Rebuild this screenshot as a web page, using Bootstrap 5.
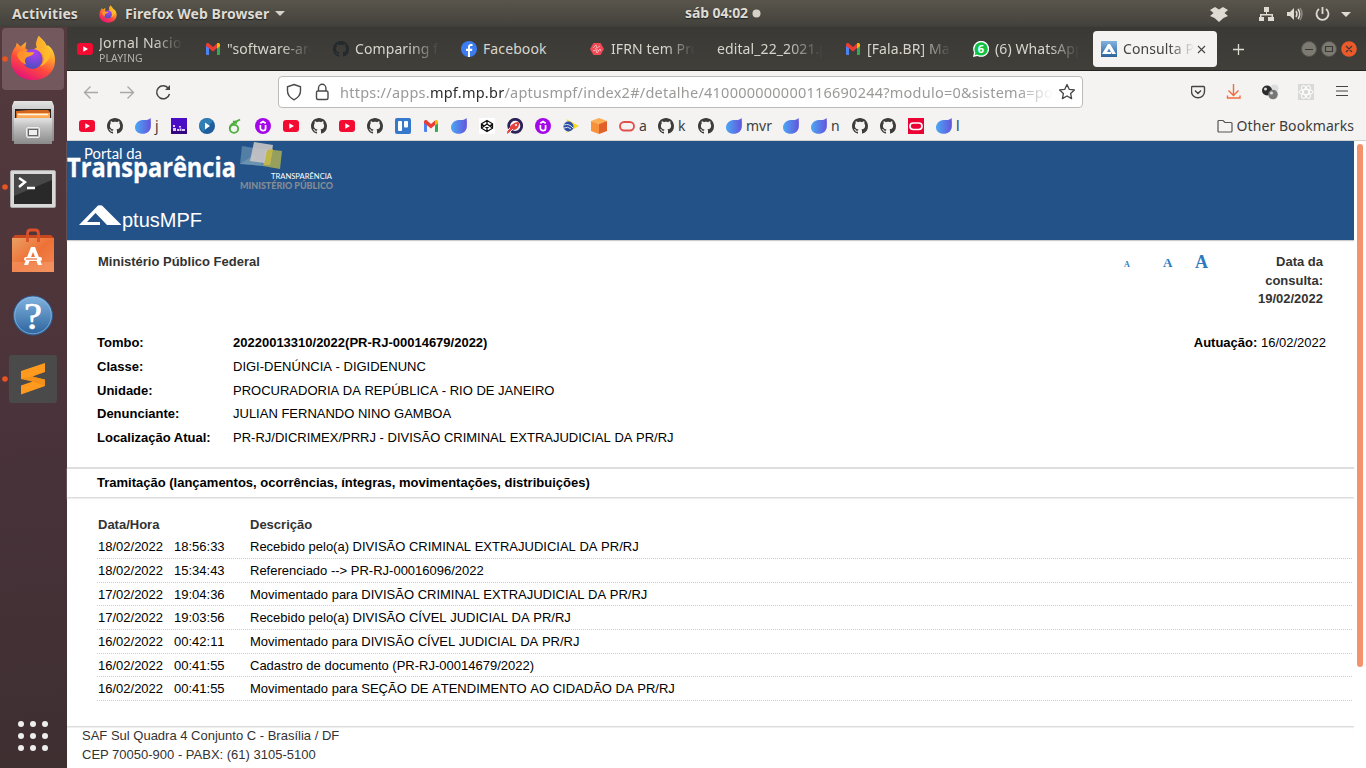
<!DOCTYPE html>
<html lang="pt-BR">
<head>
<meta charset="utf-8">
<title>Consulta Processual - AptusMPF</title>
<meta name="viewport" content="width=device-width, initial-scale=1">
<link href="https://cdn.jsdelivr.net/npm/bootstrap@5.3.0/dist/css/bootstrap.min.css" rel="stylesheet">
<style>
body{width:1366px;height:768px;overflow:hidden;font-family:"Noto Sans","Open Sans",sans-serif;font-size:14px;line-height:20px;color:#3c3c3c;background:#fff}
svg{display:block;flex:none}
.topbar{height:27px;background:linear-gradient(#59554c,#45433d 90%,#3f3e39);color:#dfdbd2;font-weight:700;font-size:14px;text-shadow:0 1px 1px #222}
.topbar .clock{left:685px;top:3px;letter-spacing:-.1px}
.topbar .act{width:68px;margin-left:12px;margin-right:19px;letter-spacing:.1px}
.topbar .app{width:150px;letter-spacing:.05px}
.launcher{width:67px;background:linear-gradient(175deg,#523a3e,#4e353a 35%,#48323a 60%,#3e2f31)}
.stripbar{height:44px;background:linear-gradient(#3a3935,#403f3a);border-bottom:1px solid #24231f;color:#d9d5cc}
.tabitem{width:128px;padding:4px 2px}
.tabitem>div{padding-left:8px;height:36px;border-radius:4px;gap:6px}
.lbl{width:84px;overflow:hidden;white-space:nowrap;letter-spacing:.1px;-webkit-mask-image:linear-gradient(90deg,#000 65%,transparent);mask-image:linear-gradient(90deg,#000 65%,transparent)}
.noicon .lbl{width:106px}
.tabitem.on>div{background:#f5f3f2;color:#45433f}
.tabitem.on .lbl{width:71px}
.tabitem.full .lbl{-webkit-mask-image:none;mask-image:none}
.tabtitle{line-height:17px;letter-spacing:.3px}
.playing{font-size:10.5px;line-height:14px;color:#b5b2ab}
.navrow{height:41px;background:#f4f3f2}
.urlbox{width:805px;height:32px;background:#fff;border:1px solid #bdbbb9;border-radius:4px;color:#9b9a99;margin-left:107px}
.urltext{width:713px;overflow:hidden;white-space:nowrap;letter-spacing:.24px;font-size:14.5px;-webkit-mask-image:linear-gradient(90deg,#000 95%,transparent);mask-image:linear-gradient(90deg,#000 95%,transparent)}
.urltext b{font-weight:400;color:#2c2c2c}
.bmrow{height:29px;background:#f4f3f2;border-bottom:1px solid #d4d2d0;padding-left:12px;padding-right:12px}
.bm{width:28px;gap:4px;flex:none}
.bm.wj{width:36px}.bm.wa{width:39px}.bm.wk{width:40px}.bm.wm{width:57px}.bm.wn{width:41px}
.site{font-family:"Liberation Sans",Arial,sans-serif;font-size:13px;line-height:18.57px;width:1287px;color:#333}
.sitehead{height:99px;background:#235289;box-shadow:0 1px 1px #ccc}
.brandname{font-size:20px;line-height:24px;color:#fff}
.info{height:91px;padding:13px 31px 0 31px}
.sizes{font-family:"Liberation Serif",serif;font-weight:700;color:#2f7abf;line-height:18px;width:129px}
.sz1{font-size:8px;width:39px}.sz2{font-size:13px;width:32px}.sz3{font-size:18px}
.consult{width:70px;text-align:right;font-weight:700}
.facts{height:136px;padding:0 28px 0 30px;color:#000;line-height:23.75px}
.facts dt{width:136px}
.facts dd,.mv{font-kerning:none}
.trami{height:31px;border-top:2px solid #ddd;border-bottom:1px solid #ddd;box-shadow:0 1px 1px #eee;padding-left:30px;color:#000;font-weight:700;line-height:28px}
.moves{padding:18px 2px 0 30px;height:228px}
.moves .hd{height:19.300px;padding-left:1px;font-weight:700}
.moves .mv{height:23.7px;border-bottom:1px dotted #ccc;padding-left:1px;color:#000;line-height:23px}
.c1{width:76px}.c2{width:76px}.c12{width:152px}
.foot{border-top:1px solid #ddd;box-shadow:inset 0 1px 1px #eee;padding-left:15px}
.sbar{width:12px;background:#fff;padding:3px 3px 0 3px}
.sbar div{height:523px;width:6px;border-radius:3px;background:#f4926c}
</style>
<script src="https://cdn.jsdelivr.net/npm/bootstrap@5.3.0/dist/js/bootstrap.bundle.min.js"></script>
</head>
<body class="d-flex flex-column">
<svg width="0" height="0" class="position-absolute">
<defs>
<linearGradient id="fxb" x1=".8" y1="0" x2=".3" y2="1"><stop offset="0" stop-color="#fff44f"/><stop offset=".35" stop-color="#ffa72b"/><stop offset=".65" stop-color="#ff4a3c"/><stop offset="1" stop-color="#e3127b"/></linearGradient>
<radialGradient id="fxp" cx=".6" cy=".2" r=".8"><stop offset="0" stop-color="#b140f0"/><stop offset="1" stop-color="#4a4fc0"/></radialGradient>
<linearGradient id="fxo" x1="0" x2="1"><stop offset="0" stop-color="#ff8a2a"/><stop offset="1" stop-color="#ffc02a"/></linearGradient>
<linearGradient id="drop"><stop offset="0" stop-color="#4aa8f4"/><stop offset="1" stop-color="#6355dc"/></linearGradient>
<linearGradient id="steel" x2="0" y2="1"><stop offset="0" stop-color="#e4e4e4"/><stop offset=".3" stop-color="#c2c2c2"/><stop offset="1" stop-color="#8a8a8a"/></linearGradient>
<linearGradient id="bluev" x2="0" y2="1"><stop offset="0" stop-color="#82b4e0"/><stop offset="1" stop-color="#2c639d"/></linearGradient>
<linearGradient id="bag" x2="1" y2="1"><stop offset="0" stop-color="#eaa064"/><stop offset=".5" stop-color="#ee7136"/><stop offset="1" stop-color="#f08a55"/></linearGradient>
<symbol id="fox" viewBox="0 0 48 48"><path fill="url(#fxb)" d="M30 1c3 3 7 6 8 10l2 0c4 3 7 8 7 15 0 13-10 21-23 21S1 38 1 26c0-6 2-11 5-14l1-4 4 4 6-5-1 7 5 3 7-4c-2-5 1-8 2-12z"/><circle cx="23.500" cy="25" r="10.500" fill="url(#fxp)"/><path fill="url(#fxo)" d="M7 20c4-5 9-4 12-2l6 0c0 3-4 4-7 5-3 2-3 5-1 8-5-2-9-6-10-11zM30 1c-4 6-3 11 3 16 4 5 3 12-2 16 8-3 12-10 11-18l-4-4c-2-4-5-6-8-10z"/></symbol>
<symbol id="yt" viewBox="0 0 16 16"><rect y="2" width="16" height="12" rx="3" fill="#f40b32"/><path d="M6.3 5.3v5.4L11 8z" fill="#fff"/></symbol>
<symbol id="gh" viewBox="0 0 16 16"><path d="M8 0C3.58 0 0 3.58 0 8c0 3.54 2.29 6.53 5.47 7.59.4.07.55-.17.55-.38 0-.19-.01-.82-.01-1.49-2.01.37-2.53-.49-2.69-.94-.09-.23-.48-.94-.82-1.13-.28-.15-.68-.52-.01-.53.63-.01 1.08.58 1.23.82.72 1.21 1.87.87 2.33.66.07-.52.28-.87.51-1.07-1.78-.2-3.64-.89-3.64-3.95 0-.87.31-1.59.82-2.15-.08-.2-.36-1.02.08-2.12 0 0 .67-.21 2.2.82.64-.18 1.32-.27 2-.27s1.36.09 2 .27c1.53-1.04 2.2-.82 2.2-.82.44 1.1.16 1.92.08 2.12.51.56.82 1.27.82 2.15 0 3.07-1.87 3.75-3.65 3.95.29.25.54.73.54 1.48 0 1.07-.01 1.93-.01 2.2 0 .21.15.46.55.38A8.01 8.01 0 0 0 16 8c0-4.42-3.58-8-8-8z" fill="currentColor"/></symbol>
<symbol id="gm" viewBox="0 0 16 16"><path fill="#4b83f0" d="M1 3.5l3 2V14H2a1 1 0 0 1-1-1z"/><path fill="#34a853" d="M15 3.5l-3 2V14h2a1 1 0 0 0 1-1z"/><path fill="#ea3b35" d="M1 4c0-2 2-2.500 3-1.500L8 6l4-3.500V7L8 10.500 4 7.200 1 5z"/><path fill="#fbbc04" d="M12 2.500c1-1 3-.5 3 1.500v1.200L12 7.500z"/></symbol>
<symbol id="dr" viewBox="0 0 16 16"><path fill="url(#drop)" d="M15.600 0C16 3 16 6 15.800 9c-.4 4.200-3.800 6.800-8 6.800C3 15.800 0 13 0 9.500 0 5.500 3.500 2.300 7.500 2c2 0 6 .5 8.100-2z"/></symbol>
<symbol id="ud" viewBox="0 0 16 16"><circle cx="8" cy="8" r="8" fill="#a408e8"/><path d="M5.400 7v3.200a2.600 2.400 0 0 0 5.200 0V7M5.300 5.200L8 3.500l2.700 1.700" fill="none" stroke="#fff" stroke-width="1.700"/></symbol>
</defs></svg>

<header class="topbar d-flex align-items-center position-relative">
<span class="act">Activities</span>
<svg width="18" height="18"><use href="#fox"/></svg>
<span class="app ms-1 ps-1 text-nowrap">Firefox Web Browser</span>
<svg class="ms-1" width="11" height="6"><path d="M0 0h10L5 5z" fill="#d5d2ca"/></svg>
<div class="clock position-absolute d-flex align-items-center">sáb 04:02<svg class="ms-1" width="9" height="9"><circle cx="4.500" cy="4.500" r="4" fill="#d5d2ca"/></svg></div>
<svg class="ms-auto" style="margin-right:15px" width="141" height="20" fill="#dfdbd2"><path d="M5 3l4 2.500L13 3l5 3-3.500 3 3.500 3-4.500 2-4.500 4-4.500-4L0 12l3.500-3L0 6z"/><path d="M54 3h5v5h-2v2h6v3h1v4h-6v-4h3.500v-1.500h-10V13H54v4h-5v-4h1v-3h6V8h-2z"/><path d="M77 8h3l4-4v12l-4-4h-3z"/><path d="M86 7q2 3 0 6M88 5q3.500 5 0 10" fill="none" stroke="#dfdbd2" stroke-width="1.500"/><path d="M90 4q4 6 0 12" fill="none" stroke="#8c887f" stroke-width="1.500"/><path d="M109 5a6 6 0 1 0 7 0M112.500 3v7" fill="none" stroke="#dfdbd2" stroke-width="1.800"/><path d="M131 8h10l-5 5z"/></svg>
</header>

<div class="d-flex flex-grow-1 overflow-hidden">
<aside class="launcher flex-shrink-0">
<svg width="67" height="741">
<rect x="2" y="1" width="62" height="62" rx="4" fill="#73595e"/>
<use href="#fox" x="10" y="7" width="46" height="48"/>
<g fill="#e95420"><circle cx="5" cy="32" r="2.800"/><circle cx="5" cy="160" r="2.800"/><circle cx="5" cy="352" r="2.800"/></g>
<path d="M14 74h38l2 5v35H12V79z" fill="url(#steel)"/><path d="M15 82h36v10H15z" fill="#222"/><path d="M16 84l12-1h20l2 2v7H16z" fill="#d56620"/><path d="M17 86h33v5H17z" fill="#ffa957"/><path d="M18 87.500h30" stroke="#fff3df" stroke-width="1.500"/><path d="M14 91h38v26H14z" fill="url(#steel)"/><path d="M14 91.500h38" stroke="#ddd"/><rect x="26.500" y="100.500" width="13" height="10" rx="1.500" fill="#bbb" stroke="#eee"/><rect x="28.500" y="102.500" width="9" height="6" fill="#eee" stroke="#666"/>
<rect x="10.500" y="143.500" width="45" height="37" rx="1.500" fill="#d9d9d9" stroke="#aaa"/><rect x="14" y="147" width="38" height="30" fill="#292929"/><path d="M14 147h38v6L14 169z" fill="#474747"/><path d="M19 151l6 4-6 5M27 161h8" fill="none" stroke="#fff" stroke-width="2.400"/>
<path d="M12 211l3-3h36l3 3v34H12z" fill="#c7481d"/><path d="M12 211h42v34H12z" fill="url(#bag)"/><path d="M12 235h42v10H12z" fill="#f7a06e" opacity=".45"/><path d="M27.500 215v-8q0-4 3-4h5q3 0 3 4v8" fill="none" stroke="#d9512a" stroke-width="2.800"/><path d="M24 238l7-18h4l7 18h-4l-5-13-5 13z" fill="#fff"/><rect x="24" y="230" width="18" height="4" rx="2" fill="#fff"/><path d="M26 232h11" stroke="#ec6b35" stroke-width="1.200"/>
<circle cx="33" cy="288.500" r="19.500" fill="url(#bluev)" stroke="#2d5c92"/><circle cx="33" cy="288.500" r="18.300" fill="none" stroke="#8fbbe2" stroke-opacity=".7"/><text x="33" y="302" text-anchor="middle" font-family="Liberation Serif,serif" font-size="38" fill="#fff" stroke="#fff" stroke-width=".6" textLength="18" lengthAdjust="spacingAndGlyphs">?</text>
<rect x="9" y="328" width="48" height="48" rx="3" fill="#4a4a4a"/><path d="M21 344L45 336v9l-12.500 4.500 12.500 3V359l-24 8.500v-9l11.500-4L21 352z" fill="#ff9a1f"/><path d="M32.500 349.500L45 352.500V359l-12.500-4.500L21 351.500z" fill="#e58411" opacity=".45"/>
<g fill="#eee"><circle cx="21" cy="697" r="3"/><circle cx="33" cy="697" r="3"/><circle cx="45" cy="697" r="3"/><circle cx="21" cy="709" r="3"/><circle cx="33" cy="709" r="3"/><circle cx="45" cy="709" r="3"/><circle cx="21" cy="721" r="3"/><circle cx="33" cy="721" r="3"/><circle cx="45" cy="721" r="3"/></g>
</svg>
</aside>

<div class="d-flex flex-column flex-grow-1">
<div class="stripbar d-flex">
<div class="tabitem"><div class="d-flex align-items-center"><svg width="16" height="16"><use href="#yt"/></svg><div class="lbl"><div class="tabtitle">Jornal Nacional</div><div class="playing">PLAYING</div></div></div></div>
<div class="tabitem"><div class="d-flex align-items-center"><svg width="16" height="16"><use href="#gm"/></svg><div class="lbl">"software-arch</div></div></div>
<div class="tabitem"><div class="d-flex align-items-center"><svg width="16" height="16" color="#24292e"><use href="#gh"/></svg><div class="lbl">Comparing fork</div></div></div>
<div class="tabitem full"><div class="d-flex align-items-center"><svg width="16" height="16"><circle cx="8" cy="8" r="8" fill="#3c7cf0"/><path d="M7 16v-6H5V7.700h2V6c0-2 1.200-3 3-3h1.500v2.100H10c-.8 0-1 .4-1 1v1.600h2.400L11 10H9v6z" fill="#fff"/></svg><div class="lbl">Facebook</div></div></div>
<div class="tabitem"><div class="d-flex align-items-center"><svg width="16" height="16"><path d="M4.500 2h7L15 8l-3.500 6h-7L1 8z" fill="#f04a56"/><path d="M4 7l3-3 1 3 3-2M4 10l3-1 1 3 3-4 1 2M6 7l4 3" fill="none" stroke="#ffc6ca" stroke-width=".8"/></svg><div class="lbl">IFRN tem Proc</div></div></div>
<div class="tabitem noicon"><div class="d-flex align-items-center"><div class="lbl">edital_22_2021.pdf</div></div></div>
<div class="tabitem"><div class="d-flex align-items-center"><svg width="16" height="16"><use href="#gm"/></svg><div class="lbl">[Fala.BR] Manif</div></div></div>
<div class="tabitem"><div class="d-flex align-items-center"><svg width="16" height="16"><path d="M0 16l1-4.500A8 8 0 1 1 4.500 15z" fill="#fff"/><circle cx="8.100" cy="7.900" r="6.700" fill="#12c143"/><path d="M1.700 14.300l1-3.500 2.500 2.500z" fill="#12c143"/><text x="8" y="12" text-anchor="middle" font-family="Noto Sans,sans-serif" font-weight="700" font-size="11" fill="#fff">6</text></svg><div class="lbl">(6) WhatsApp</div></div></div>
<div class="tabitem on"><div class="d-flex align-items-center"><svg width="16" height="16"><rect width="16" height="16" fill="url(#bluev)"/><path d="M1 13L7 3h2l6 10h-4L8 7.500 6 11h4v2z" fill="#fff"/></svg><div class="lbl">Consulta Pro</div><svg width="9" height="9" style="margin-left:-3px"><path d="M1 1l7 7M8 1L1 8" stroke="#444" stroke-width="1.100"/></svg></div></div>
<svg width="147" height="43"><path d="M14 22.500h11M19.500 17v11" stroke="#dfdbd2" stroke-width="1.300"/><g stroke="#55534d"><circle cx="90" cy="22" r="7.500" fill="#7d7a72"/><circle cx="110" cy="22" r="7.500" fill="#7d7a72"/></g><circle cx="130" cy="22" r="7.800" fill="#ec5a2a"/><path d="M86 22.500h8M106.500 19.500h7v5h-7zM127 19l6 6M133 19l-6 6" fill="none" stroke="#3a3935" stroke-width="1.200"/></svg>
</div>

<div class="navrow d-flex align-items-center">
<svg width="104" height="30" fill="none" stroke-width="1.400"><g stroke="#a9a8a7"><path d="M31 15.500H17.500M23.500 9.500l-6 6 6 6M53 15.500h13.500M60.500 9.500l6 6-6 6"/></g><path d="M101.500 11.500a6.500 6.500 0 1 0 1 5.500" stroke="#444" stroke-width="1.500"/><path d="M103 8v5h-5z" fill="#444"/></svg>
<div class="urlbox d-flex align-items-center">
<svg width="61" height="30" fill="none" stroke="#4a4a4a" stroke-width="1.400"><path d="M15 7.500l6.500 2.300v4c0 4-2.500 7-6.500 9-4-2-6.500-5-6.500-9v-4z"/><rect x="37.500" y="14" width="11.500" height="8.500" rx="1.500"/><path d="M39.500 14v-3a3.700 3.700 0 0 1 7.400 0v3"/></svg>
<div class="urltext">https://apps.<b>mpf.mp.br</b>/aptusmpf/index2#/detalhe/410000000000116690244?modulo=0&amp;sistema=portal</div>
<svg width="28" height="30" fill="none" stroke="#444" stroke-width="1.300"><path d="M14 7.500l2.200 4.800 5.200.6-3.800 3.500 1 5.200-4.600-2.600-4.600 2.600 1-5.200-3.800-3.500 5.200-.6z" stroke-linejoin="round"/></svg>
</div>
<svg class="ms-auto" width="175" height="30" fill="none" stroke-width="1.400"><g stroke="#444"><path d="M1.500 9.500h11q1 0 1 1v4a6.500 6.300 0 0 1-13 0v-4q0-1 1-1zM4 13.500l3 3 3-3"/><path d="M145 9.500h12M145 14h12M145 18.500h12" stroke-width="1.200"/></g><path d="M42.500 7v11M37.500 13.500l5 5 5-5M36.500 18.500v2.500h12.500v-2.500" stroke="#ef6c3b"/><circle cx="83.500" cy="11.500" r="4" fill="#dedede"/><circle cx="76" cy="13.500" r="5" fill="#2c2c2c"/><circle cx="74.500" cy="12" r="1.500" fill="#ddd"/><circle cx="82" cy="17.500" r="4.800" fill="#777"/><circle cx="80.500" cy="16" r="1.500" fill="#ddd"/><rect x="107" y="7" width="16" height="16" fill="#d9d9d8"/><g stroke="#fff" stroke-width="1"><ellipse cx="115" cy="15" rx="7" ry="2.700"/><ellipse cx="115" cy="15" rx="7" ry="2.700" transform="rotate(60 115 15)"/><ellipse cx="115" cy="15" rx="7" ry="2.700" transform="rotate(120 115 15)"/></g></svg>
</div>

<div class="bmrow d-flex align-items-center">
<div class="bm"><svg width="16" height="16"><use href="#yt"/></svg></div>
<div class="bm"><svg width="16" height="16"><use href="#gh"/></svg></div>
<div class="bm wj d-flex"><svg width="16" height="16" class="my-auto"><use href="#dr"/></svg>j</div>
<div class="bm"><svg width="16" height="16"><rect width="16" height="16" fill="#4a0cc4"/><path d="M0 11h16v5H0z" fill="#32077f"/><path d="M2 7h2v2H2zM2 10h3v3H2zM6 11h2v2H6zM8 8h2v1.500H8zM8.500 10.500h2V13h-2zM11 11h3v2h-3z" fill="#ddc8ff"/></svg></div>
<div class="bm"><svg width="16" height="16"><circle cx="8" cy="8" r="8" fill="#1f5e9c"/><path d="M0 8a8 8 0 0 1 14-5L4 14z" fill="#3b94c6" opacity=".6"/><path d="M6 4.500v7l5-3.500z" fill="#fff"/></svg></div>
<div class="bm"><svg width="16" height="16" fill="none" stroke="#4caf3c" stroke-width="1.800"><ellipse cx="7" cy="10.800" rx="4.200" ry="4"/><path d="M2.800 10.500c0-3 2.200-6 7.200-5.500M6 3.200c2 1.200 4 .3 7-1.700"/></svg></div>
<div class="bm"><svg width="16" height="16"><use href="#ud"/></svg></div>
<div class="bm"><svg width="16" height="16"><use href="#yt"/></svg></div>
<div class="bm"><svg width="16" height="16"><use href="#gh"/></svg></div>
<div class="bm"><svg width="16" height="16"><use href="#yt"/></svg></div>
<div class="bm"><svg width="16" height="16"><use href="#gh"/></svg></div>
<div class="bm"><svg width="16" height="16"><rect width="16" height="16" rx="2" fill="#3578cc"/><rect x="3" y="3" width="4" height="10" rx="1" fill="#fff"/><rect x="9" y="3" width="4" height="6.500" rx="1" fill="#fff"/></svg></div>
<div class="bm"><svg width="16" height="16"><use href="#gm"/></svg></div>
<div class="bm"><svg width="16" height="16"><use href="#dr"/></svg></div>
<div class="bm"><svg width="16" height="16"><rect width="16" height="16" rx="1" fill="#fff"/><path d="M8 2.500l5.500 3.300v4.400L8 13.500l-5.500-3.300V5.800zM8 2.500V6M8 10v3.500M2.500 6L8 10l5.500-4M2.500 10L8 6l5.500 4" fill="none" stroke="#111" stroke-width="1.300"/></svg></div>
<div class="bm"><svg width="16" height="16"><circle cx="8.200" cy="7.800" r="6.500" fill="none" stroke="#2b2357" stroke-width="2.800"/><path d="M0 16c0-5 4-10 10-12 1.500 0 3 1 2 3-1 4-4 5-6 5z" fill="#e8403c"/><path d="M1 16l5-5M0 13l3-3" stroke="#f4f3f2"/><circle cx="9" cy="7" r="1.100" fill="#fff"/></svg></div>
<div class="bm"><svg width="16" height="16"><use href="#ud"/></svg></div>
<div class="bm"><svg width="16" height="16"><path d="M3 1l13 7-13 7 4-7z" fill="#f9dc22"/><circle cx="5.500" cy="8.500" r="5" fill="#2c4fa5"/><path d="M1 7q5-2 9 3M1 10q4-2 7 1" fill="none" stroke="#fff" stroke-width=".8"/></svg></div>
<div class="bm"><svg width="16" height="16"><path d="M8 0l8 3-8 3-8-3z" fill="#fbae52"/><path d="M0 3l8 3v10l-8-3z" fill="#f7913a"/><path d="M16 3L8 6v10l8-3z" fill="#e2602a"/></svg></div>
<div class="bm wa d-flex"><svg width="16" height="16" class="my-auto"><rect x="1" y="4" width="14" height="8.500" rx="4.200" fill="none" stroke="#e2504c" stroke-width="1.900"/></svg>a</div>
<div class="bm wk d-flex"><svg width="16" height="16" class="my-auto"><use href="#gh"/></svg>k</div>
<div class="bm"><svg width="16" height="16"><use href="#gh"/></svg></div>
<div class="bm wm d-flex"><svg width="16" height="16" class="my-auto"><use href="#dr"/></svg>mvr</div>
<div class="bm"><svg width="16" height="16"><use href="#dr"/></svg></div>
<div class="bm wn d-flex"><svg width="16" height="16" class="my-auto"><use href="#dr"/></svg>n</div>
<div class="bm"><svg width="16" height="16"><use href="#gh"/></svg></div>
<div class="bm"><svg width="16" height="16"><use href="#gh"/></svg></div>
<div class="bm"><svg width="16" height="16"><rect width="16" height="16" fill="#ea0234"/><rect x="2" y="5" width="12" height="6.500" rx="3.200" fill="none" stroke="#fff" stroke-width="1.700"/></svg></div>
<div class="bm d-flex"><svg width="16" height="16" class="my-auto"><use href="#dr"/></svg>l</div>
<div class="ms-auto d-flex align-items-center gap-1"><svg width="16" height="16"><path d="M1 13V3.500q0-1 1-1h4l2 2h6q1 0 1 1V13q0 1-1 1H2q-1 0-1-1z" fill="none" stroke="#555" stroke-width="1.200"/></svg><span style="letter-spacing:.07px">Other Bookmarks</span></div>
</div>

<div class="d-flex flex-grow-1">
<main class="site">
<div class="sitehead">
<svg width="300" height="58" fill="#fff">
<text x="17" y="18" font-family="Lato,sans-serif" font-size="15.500" textLength="58" lengthAdjust="spacingAndGlyphs">Portal da</text>
<text x="0" y="36" font-family="Open Sans,sans-serif" font-weight="700" font-size="26" stroke="#fff" stroke-width=".3" textLength="169" lengthAdjust="spacingAndGlyphs">Transparência</text>
<path d="M175 5l25 4-3 16-24-2z" fill="#6d96b3" opacity=".65"/><path d="M173 23l14-9 10 11z" fill="#91b1c2" opacity=".4"/><path d="M198 8l17 2-2 18-17-3z" fill="#aaad55" opacity=".85"/><path d="M187 1l19 3-3 19-20-3z" fill="#c9c5c7" opacity=".9"/><path d="M197 24l3-15 6-1-3 16z" fill="#c1b64a"/>
<text x="204" y="38" font-family="Lato,sans-serif" font-size="7.500" textLength="61" lengthAdjust="spacingAndGlyphs">TRANSPARÊNCIA</text>
<text x="173" y="48" font-family="Lato,sans-serif" font-weight="900" font-size="9.500" fill="#858c94" textLength="93" lengthAdjust="spacingAndGlyphs">MINISTÉRIO PÚBLICO</text>
</svg>
<div class="d-flex ps-2 ms-1"><svg width="43" height="30"><path d="M0 26L19 6.500q1-.5 4 0L42 25.500v.5H28L16.500 14 8 23h13v3z" fill="#fff"/></svg><span class="brandname" style="margin-top:9px">ptusMPF</span></div>
</div>
<div class="info d-flex"><b>Ministério Público Federal</b>
<div class="ms-auto d-flex sizes align-items-start"><span class="sz1" style="padding-top:3px">A</span><span class="sz2" style="padding-top:1px">A</span><span class="sz3">A</span></div>
<div class="consult">Data da consulta: 19/02/2022</div></div>
<div class="facts d-flex">
<dl class="m-0">
<div class="d-flex"><dt>Tombo:</dt><dd class="m-0"><b>20220013310/2022(PR-RJ-00014679/2022)</b></dd></div>
<div class="d-flex"><dt>Classe:</dt><dd class="m-0">DIGI-DENÚNCIA - DIGIDENUNC</dd></div>
<div class="d-flex"><dt>Unidade:</dt><dd class="m-0">PROCURADORIA DA REPÚBLICA - RIO DE JANEIRO</dd></div>
<div class="d-flex"><dt>Denunciante:</dt><dd class="m-0">JULIAN FERNANDO NINO GAMBOA</dd></div>
<div class="d-flex"><dt>Localização Atual:</dt><dd class="m-0">PR-RJ/DICRIMEX/PRRJ - DIVISÃO CRIMINAL EXTRAJUDICIAL DA PR/RJ</dd></div>
</dl>
<div class="ms-auto"><b>Autuação:</b> 16/02/2022</div>
</div>
<div class="trami">Tramitação (lançamentos, ocorrências, íntegras, movimentações, distribuições)</div>
<div class="moves">
<div class="d-flex hd"><div class="c12">Data/Hora</div><div>Descrição</div></div>
<div class="d-flex mv"><div class="c1">18/02/2022</div><div class="c2">18:56:33</div><div>Recebido pelo(a) DIVISÃO CRIMINAL EXTRAJUDICIAL DA PR/RJ</div></div>
<div class="d-flex mv"><div class="c1">18/02/2022</div><div class="c2">15:34:43</div><div>Referenciado --&gt; PR-RJ-00016096/2022</div></div>
<div class="d-flex mv"><div class="c1">17/02/2022</div><div class="c2">19:04:36</div><div>Movimentado para DIVISÃO CRIMINAL EXTRAJUDICIAL DA PR/RJ</div></div>
<div class="d-flex mv"><div class="c1">17/02/2022</div><div class="c2">19:03:56</div><div>Recebido pelo(a) DIVISÃO CÍVEL JUDICIAL DA PR/RJ</div></div>
<div class="d-flex mv"><div class="c1">16/02/2022</div><div class="c2">00:42:11</div><div>Movimentado para DIVISÃO CÍVEL JUDICIAL DA PR/RJ</div></div>
<div class="d-flex mv"><div class="c1">16/02/2022</div><div class="c2">00:41:55</div><div>Cadastro de documento (PR-RJ-00014679/2022)</div></div>
<div class="d-flex mv"><div class="c1">16/02/2022</div><div class="c2">00:41:55</div><div>Movimentado para SEÇÃO DE ATENDIMENTO AO CIDADÃO DA PR/RJ</div></div>
</div>
<footer class="foot">SAF Sul Quadra 4 Conjunto C - Brasília / DF<br>CEP 70050-900 - PABX: (61) 3105-5100</footer>
</main>
<div class="sbar"><div></div></div>
</div>
</div>
</div>
</body>
</html>
